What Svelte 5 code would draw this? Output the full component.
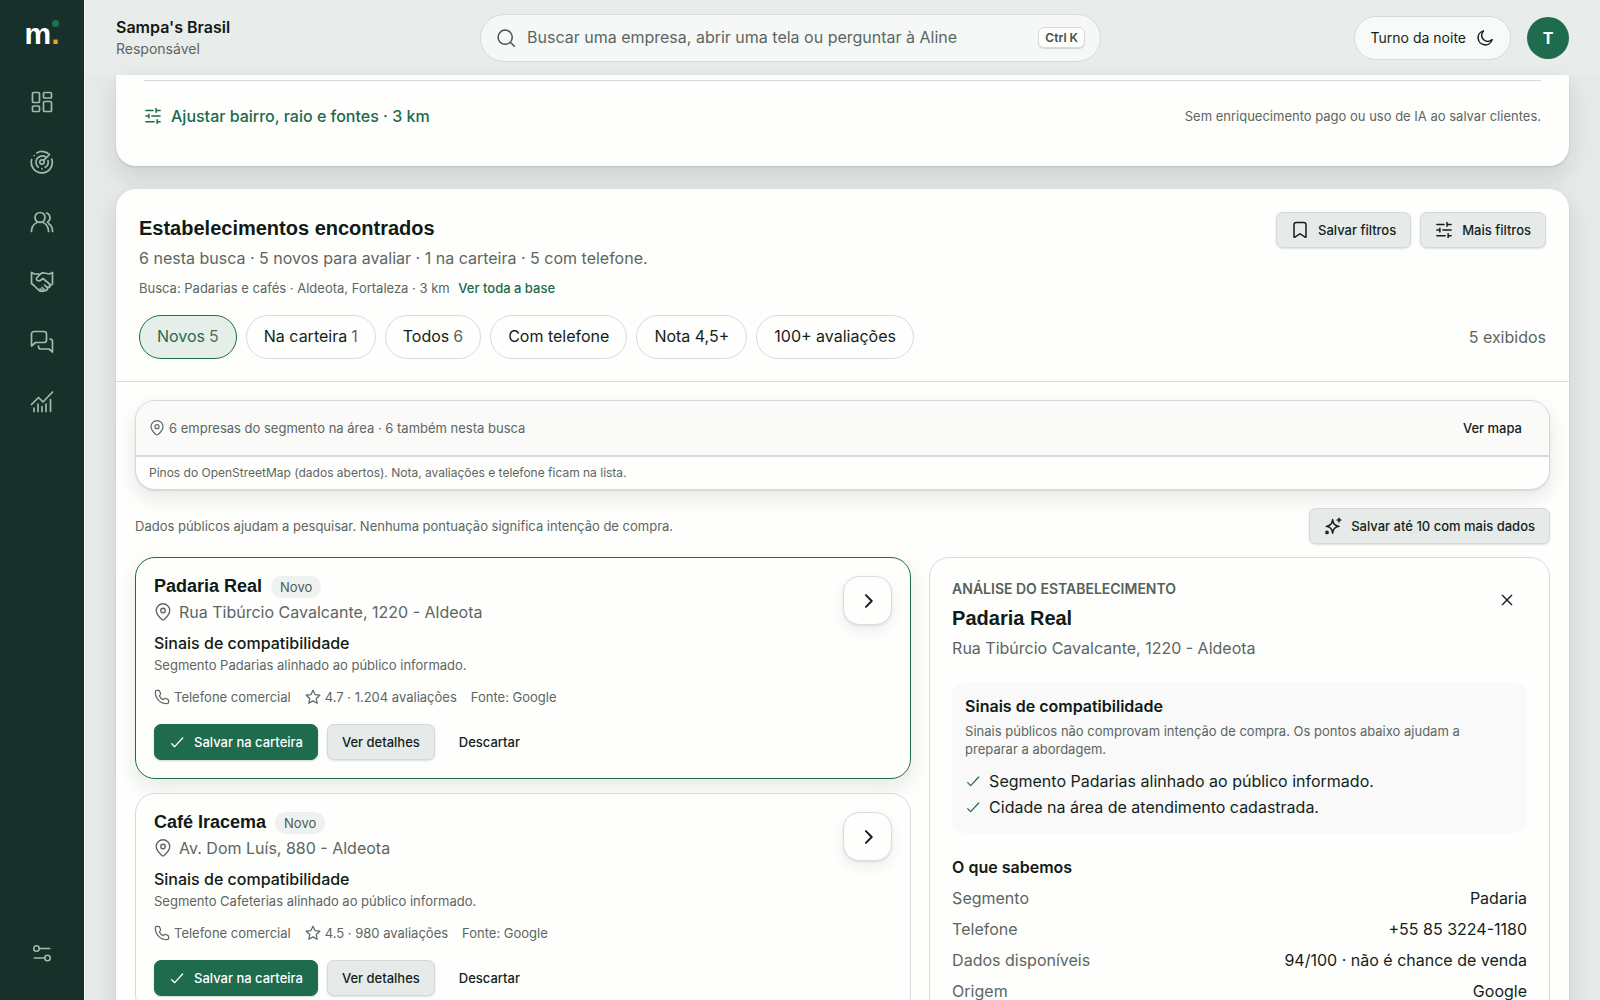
<script>
  const circle = (cx, cy, r) => `M${cx - r} ${cy}a${r} ${r} 0 1 0 ${r * 2} 0a${r} ${r} 0 1 0 ${-r * 2} 0`;

  const icons = {
    painel: [
      'M3.5 2.5h5a1 1 0 0 1 1 1v8a1 1 0 0 1-1 1h-5a1 1 0 0 1-1-1v-8a1 1 0 0 1 1-1z',
      'M3.5 16h5a1 1 0 0 1 1 1v3.5a1 1 0 0 1-1 1h-5a1 1 0 0 1-1-1V17a1 1 0 0 1 1-1z',
      'M14.5 2.500h6a1 1 0 0 1 1 1v3.500a1 1 0 0 1-1 1h-6a1 1 0 0 1-1-1v-3.500a1 1 0 0 1 1-1z',
      'M14.5 11.500h6a1 1 0 0 1 1 1v8a1 1 0 0 1-1 1h-6a1 1 0 0 1-1-1v-8a1 1 0 0 1 1-1z',
    ],
    radar: [
      circle(12, 12, 2.2),
      'M13.600 10.400 19.500 4.500M6.800 2.900a10.500 10.500 0 0 1 12.700 1.600',
      'M1.700 9.500a10.500 10.500 0 1 0 20-.5',
      'M15.500 6.800a6.300 6.300 0 0 0-7.200 10.300',
      'M18 10.500a6.300 6.300 0 0 1-2.700 6.800M12 18.700v.01M4.200 5.500v.01',
    ],
    pessoas: [
      circle(10, 7.5, 5),
      'M1.500 21.500v-1a8.500 8.500 0 0 1 17 0v1',
      'M16.500 3a5 5 0 0 1 .8 9.200M18.500 13.500a8.500 8.500 0 0 1 4 7.300v.7',
    ],
    acordo: [
      'M1.500 2.500l3 1.500h4.500M22.500 2.500l-3 1.500-5.500-1c-1.500-.2-2.500.2-3.500 1L7 7.500c-1 1-.7 2.500.5 3s2.500.3 3.500-.5l2-1.500 6.500 5.500c1 1 1 2 .2 2.800s-2 .7-2.700 0',
      'M1.500 3v10.500l2.500 2 5 5c1.200 1.200 2.700 1.200 3.500.2M22.500 3v11l-3 1.500',
      'M14.500 15l2.500 2.500c.8 1 .6 2-.2 2.600s-2 .3-2.600-.4L12 17.500M14.300 19.700c.2 1-.5 1.800-1.800 1.500L10 19',
    ],
    conversa: [
      'M4 1.500h10a2.500 2.500 0 0 1 2.500 2.500v6a2.500 2.500 0 0 1-2.500 2.500H5.500L1.500 16V4A2.500 2.500 0 0 1 4 1.500z',
      'M8.500 16v.5a2.500 2.500 0 0 0 2.500 2.500h8l3.500 3V11.500A2.500 2.500 0 0 0 20 9',
    ],
    grafico: [
      'M1.500 14.500l7-7 4.500 4.500L22.500 2',
      'M4 21.500V18M8 21.500V14M12 21.500V16.500M16 21.500V14M20.500 21.500V9.500',
    ],
    ajustes: [circle(6, 7, 3), 'M9 7h11.500', circle(18, 17.5, 3), 'M3.500 17.500H15'],
    filtros: [
      'M2.500 4.500h9.500M16 4.500h5.500M16 2v5M2.500 12h4M10.500 12h11M6.500 9.500v5M2.500 19.500h11M17.500 19.500h4M17.500 17v5',
    ],
    busca: [circle(11, 11, 8.5), 'M17.500 17.500L22 22'],
    lua: ['M21.500 14.100A9.500 9.500 0 1 1 9.900 2.500a7.800 7.800 0 0 0 11.600 11.600z'],
    marcador: ['M4 21V5a3 3 0 0 1 3-3h10a3 3 0 0 1 3 3v16c0 .8-.6 1-1.200.6L12 17l-6.800 4.600C4.600 22 4 21.800 4 21z'],
    pino: [
      'M12 22.500c-1 0-1.500-.6-2.200-1.200C6.500 18.200 3 14.500 3 10a9 9 0 0 1 18 0c0 4.500-3.500 8.200-6.800 11.300-.7.600-1.200 1.200-2.200 1.200z',
      circle(12, 10, 3),
    ],
    telefone: [
      'M8.500 3.500C8 2.300 7.300 2 6.300 2H4.500C3 2 2 3 2 4.500 2 14.500 9.500 22 19.500 22c1.500 0 2.500-1 2.500-2.500v-1.800c0-1-.4-1.700-1.500-2.200l-3-1.200c-1-.4-1.700-.2-2.400.5l-1.100 1.200C11.500 15 9 12.500 8 10l1.200-1.100c.7-.7.9-1.400.5-2.400z',
    ],
    estrela: [
      'M12 1.800l3 6.600 7.200.9-5.300 4.900 1.400 7.200L12 17.800l-6.300 3.600 1.400-7.200L1.800 9.300 9 8.400z',
    ],
    check: ['M4 14.500l4.500 4.500L20.500 6'],
    fechar: ['M5 5l14 14M19 5L5 19'],
    seta: ['M9.500 5l7 7-7 7'],
    magica: [
      'M11.500 3.500c.8 5.700 2.500 8 8.500 9-6 1-7.700 3.300-8.500 9-.8-5.700-2.500-8-8.500-9 6-1 7.700-3.300 8.500-9z',
      'M20 1.500v5M17.500 4h5',
      circle(4, 20.5, 1.5),
    ],
  };

  const menu = [
    { icone: 'painel', nome: 'Painel' },
    { icone: 'radar', nome: 'Radar' },
    { icone: 'pessoas', nome: 'Clientes' },
    { icone: 'acordo', nome: 'Negócios' },
    { icone: 'conversa', nome: 'Conversas' },
    { icone: 'grafico', nome: 'Relatórios' },
  ];

  const filtros = [
    { nome: 'Novos', total: 5 },
    { nome: 'Na carteira', total: 1 },
    { nome: 'Todos', total: 6 },
    { nome: 'Com telefone' },
    { nome: 'Nota 4,5+' },
    { nome: '100+ avaliações' },
  ];

  const empresas = [
    {
      nome: 'Padaria Real',
      endereco: 'Rua Tibúrcio Cavalcante, 1220 - Aldeota',
      sinal: 'Segmento Padarias alinhado ao público informado.',
      nota: '4.7 · 1.204 avaliações',
    },
    {
      nome: 'Café Iracema',
      endereco: 'Av. Dom Luís, 880 - Aldeota',
      sinal: 'Segmento Cafeterias alinhado ao público informado.',
      nota: '4.5 · 980 avaliações',
    },
  ];

  const pontos = ['Segmento Padarias alinhado ao público informado.', 'Cidade na área de atendimento cadastrada.'];

  const dados = [
    ['Segmento', 'Padaria'],
    ['Telefone', '+55 85 3224-1180'],
    ['Dados disponíveis', '94/100 · não é chance de venda'],
    ['Origem', 'Google'],
  ];

  let filtroAtivo = $state('Novos');
  let selecionada = $state(0);
</script>

{#snippet icone(nome, tamanho)}
  <svg class="icone" width={tamanho} height={tamanho} viewBox="0 0 24 24" aria-hidden="true">
    {#each icons[nome] as d}
      <path {d} />
    {/each}
  </svg>
{/snippet}

<div class="app">
  <aside class="lateral">
    <a class="logo" href="#inicio" aria-label="Início">m<span class="ponto">.</span><span class="bola"></span></a>
    <nav>
      {#each menu as item}
        <a href="#{item.icone}" aria-label={item.nome}>{@render icone(item.icone, 24)}</a>
      {/each}
    </nav>
    <a class="config" href="#ajustes" aria-label="Ajustes">{@render icone('ajustes', 22)}</a>
  </aside>

  <div class="pagina">
    <header class="topo">
      <div class="conta">
        <strong>Sampa's Brasil</strong>
        <span>Responsável</span>
      </div>
      <label class="busca">
        {@render icone('busca', 20)}
        <input type="text" aria-label="Buscar" placeholder="Buscar uma empresa, abrir uma tela ou perguntar à Aline" />
        <kbd>Ctrl K</kbd>
      </label>
      <div class="usuario">
        <button class="turno">Turno da noite {@render icone('lua', 18)}</button>
        <button class="avatar">T</button>
      </div>
    </header>

    <main>
      <section class="cartao consulta">
        <div class="consulta-linha">
          <a class="ajustar" href="#fontes">{@render icone('filtros', 18)} Ajustar bairro, raio e fontes · 3 km</a>
          <span class="pequeno">Sem enriquecimento pago ou uso de IA ao salvar clientes.</span>
        </div>
      </section>

      <section class="cartao resultados">
        <div class="cabecalho">
          <div class="cabecalho-linha">
            <div>
              <h2>Estabelecimentos encontrados</h2>
              <p class="resumo">6 nesta busca · 5 novos para avaliar · 1 na carteira · 5 com telefone.</p>
              <p class="pequeno origem">
                Busca: Padarias e cafés · Aldeota, Fortaleza · 3 km <a href="#base">Ver toda a base</a>
              </p>
            </div>
            <div class="acoes">
              <button class="botao cinza">{@render icone('marcador', 18)} Salvar filtros</button>
              <button class="botao cinza">{@render icone('filtros', 18)} Mais filtros</button>
            </div>
          </div>
          <div class="filtros">
            {#each filtros as filtro}
              <button class="chip" class:ativo={filtroAtivo === filtro.nome} onclick={() => (filtroAtivo = filtro.nome)}>
                {filtro.nome}{#if filtro.total}<span>{filtro.total}</span>{/if}
              </button>
            {/each}
            <span class="exibidos">5 exibidos</span>
          </div>
        </div>

        <div class="corpo">
          <div class="mapa">
            <div class="mapa-topo">
              <span class="mapa-texto pequeno">{@render icone('pino', 16)} 6 empresas do segmento na área · 6 também nesta busca</span>
              <button class="botao limpo">Ver mapa</button>
            </div>
            <p class="mapa-nota">Pinos do OpenStreetMap (dados abertos). Nota, avaliações e telefone ficam na lista.</p>
          </div>

          <div class="aviso">
            <span class="pequeno">Dados públicos ajudam a pesquisar. Nenhuma pontuação significa intenção de compra.</span>
            <button class="botao cinza">{@render icone('magica', 18)} Salvar até 10 com mais dados</button>
          </div>

          <div class="colunas">
            <div class="lista">
              {#each empresas as empresa, i}
                <article class="empresa" class:selecionada={selecionada === i}>
                  <div class="empresa-info">
                    <div class="titulo">
                      <h3>{empresa.nome}</h3>
                      <span class="selo">Novo</span>
                    </div>
                    <p class="endereco">{@render icone('pino', 18)} {empresa.endereco}</p>
                    <h4>Sinais de compatibilidade</h4>
                    <p class="pequeno">{empresa.sinal}</p>
                    <div class="meta pequeno">
                      <span>{@render icone('telefone', 16)} Telefone comercial</span>
                      <span>{@render icone('estrela', 16)} {empresa.nota}</span>
                      <span>Fonte: Google</span>
                    </div>
                    <div class="acoes">
                      <button class="botao verde">{@render icone('check', 16)} Salvar na carteira</button>
                      <button class="botao cinza">Ver detalhes</button>
                      <button class="botao limpo">Descartar</button>
                    </div>
                  </div>
                  <button class="abrir" aria-label="Abrir {empresa.nome}" onclick={() => (selecionada = i)}>
                    {@render icone('seta', 20)}
                  </button>
                </article>
              {/each}
            </div>

            <aside class="analise">
              <div class="analise-topo">
                <div>
                  <p class="rotulo">ANÁLISE DO ESTABELECIMENTO</p>
                  <h2>Padaria Real</h2>
                  <p class="local">Rua Tibúrcio Cavalcante, 1220 - Aldeota</p>
                </div>
                <button class="fechar" aria-label="Fechar">{@render icone('fechar', 16)}</button>
              </div>
              <div class="sinais">
                <h4>Sinais de compatibilidade</h4>
                <p>Sinais públicos não comprovam intenção de compra. Os pontos abaixo ajudam a preparar a abordagem.</p>
                <ul>
                  {#each pontos as ponto}
                    <li>{@render icone('check', 16)} {ponto}</li>
                  {/each}
                </ul>
              </div>
              <h4 class="sabemos">O que sabemos</h4>
              <dl>
                {#each dados as [campo, valor]}
                  <div>
                    <dt>{campo}</dt>
                    <dd>{valor}</dd>
                  </div>
                {/each}
              </dl>
            </aside>
          </div>
        </div>
      </section>
    </main>
  </div>
</div>

<style>
  :global(body) {
    background: #e6eae9;
  }

  .app {
    display: flex;
    height: 100vh;
    overflow: hidden;
    font-family: Inter, "Liberation Sans", sans-serif;
    font-size: 16px;
    line-height: 24px;
    color: #141f1b;
  }

  .app * {
    box-sizing: border-box;
  }

  h2, h3, h4, p, ul, dl, dd {
    margin: 0;
    padding: 0;
  }

  h2, h3 {
    font-family: "Liberation Sans", Arial, sans-serif;
    font-weight: 700;
    color: #101a16;
  }

  h2 {
    font-size: 20px;
    line-height: 32px;
  }

  button, input {
    font-family: inherit;
    color: inherit;
  }

  button {
    cursor: pointer;
  }

  a {
    color: #1b6a4c;
    text-decoration: none;
  }

  .icone {
    flex: none;
    fill: none;
    stroke: currentColor;
    stroke-width: 2;
    stroke-linecap: round;
    stroke-linejoin: round;
  }

  .pequeno {
    font-size: 13px;
    line-height: 20px;
    color: #5c6662;
  }

  /* Barra lateral */
  .lateral {
    flex: none;
    width: 84px;
    padding: 16px 0 36px;
    display: flex;
    flex-direction: column;
    align-items: center;
    background: #18302a;
  }

  .lateral a {
    color: #a3b9af;
  }

  .lateral .icone {
    display: block;
    stroke-width: 1.7;
  }

  .lateral .logo {
    position: relative;
    height: 36px;
    font-family: "Liberation Sans", Arial, sans-serif;
    font-size: 30px;
    font-weight: 700;
    line-height: 36px;
    color: #ffffff;
  }

  .ponto {
    color: #e3a31f;
  }

  .bola {
    position: absolute;
    top: 4px;
    right: 1px;
    width: 7px;
    height: 7px;
    border-radius: 50%;
    background: #1f7252;
  }

  .lateral nav {
    display: flex;
    flex-direction: column;
    gap: 36px;
    margin-top: 38px;
  }

  .config {
    margin-top: auto;
  }

  /* Topo */
  .pagina {
    flex: 1;
    min-width: 0;
    border-left: 1px solid #f4f6f5;
  }

  .topo {
    display: grid;
    grid-template-columns: 7fr minmax(0, 621px) 9fr;
    align-items: center;
    height: 75px;
    padding: 0 31px;
    background: #e8eceb;
  }

  .conta {
    display: flex;
    flex-direction: column;
  }

  .conta strong {
    font-weight: 600;
    line-height: 22px;
    color: #101a16;
  }

  .conta span {
    font-size: 14px;
    line-height: 22px;
    color: #5c6662;
  }

  .busca {
    display: flex;
    align-items: center;
    gap: 11px;
    height: 48px;
    padding: 0 15px;
    border: 1px solid #d6dcda;
    border-radius: 24px;
    background: #f6f8f8;
    color: #46504c;
  }

  .busca input {
    flex: 1;
    min-width: 0;
    padding: 0 0 2px;
    border: 0;
    outline: 0;
    background: none;
    font-size: 16px;
  }

  .busca input::placeholder {
    color: #5c6662;
    opacity: 1;
  }

  .busca .icone {
    stroke-width: 1.8;
  }

  kbd {
    padding: 0 6px;
    border: 1px solid #d6dcda;
    border-radius: 6px;
    background: #fefefc;
    box-shadow: 0 1px 1px rgba(20, 40, 32, 0.15);
    font-family: inherit;
    font-size: 12px;
    font-weight: 600;
    line-height: 19px;
  }

  .usuario {
    display: flex;
    justify-content: flex-end;
    align-items: center;
    gap: 16px;
  }

  .turno {
    display: flex;
    align-items: center;
    gap: 10px;
    height: 44px;
    padding: 0 16px;
    border: 1px solid #d6dcda;
    border-radius: 22px;
    background: #f8faf9;
    font-size: 14px;
  }

  .avatar {
    width: 42px;
    height: 42px;
    padding: 0;
    border: 0;
    border-radius: 50%;
    background: #1f6b4e;
    color: #ffffff;
    font-size: 16px;
    font-weight: 700;
  }

  /* Cartões */
  main {
    display: flex;
    flex-direction: column;
    gap: 23px;
    padding: 0 31px 32px;
  }

  .cartao {
    background: #fefefc;
    border-radius: 20px;
    box-shadow: 0 1px 2px rgba(24, 48, 42, 0.14), 0 10px 24px rgba(24, 48, 42, 0.13);
  }

  .consulta {
    padding: 5px 28px 15px;
    border-radius: 0 0 20px 20px;
  }

  .consulta-linha {
    display: flex;
    justify-content: space-between;
    align-items: center;
    height: 71px;
    border-top: 1px solid #d3d9d7;
  }

  .ajustar {
    display: flex;
    align-items: center;
    gap: 9px;
    font-weight: 500;
  }

  .cabecalho {
    padding: 23px 23px 22px;
    border-bottom: 1px solid #d6dcda;
  }

  .cabecalho-linha {
    display: flex;
    justify-content: space-between;
    align-items: flex-start;
  }

  .resumo {
    line-height: 28px;
    color: #5c6662;
  }

  .origem {
    margin-top: 6px;
  }

  .origem a {
    margin-left: 5px;
    font-weight: 500;
  }

  .acoes {
    display: flex;
    gap: 9px;
  }

  .botao {
    display: flex;
    align-items: center;
    gap: 9px;
    height: 36px;
    padding: 0 14px 1px;
    border: 1px solid #d3d9d7;
    border-radius: 7px;
    font-size: 13px;
    font-weight: 500;
    white-space: nowrap;
  }

  .cinza {
    background: #e6ebea;
    box-shadow: 0 1px 2px rgba(24, 48, 42, 0.14);
  }

  .verde {
    background: #1e6b4e;
    border-color: #1e6b4e;
    color: #ffffff;
    box-shadow: 0 1px 2px rgba(24, 48, 42, 0.2);
  }

  .limpo {
    border-color: transparent;
    background: none;
  }

  .filtros {
    display: flex;
    align-items: center;
    gap: 9px;
    margin-top: 17px;
  }

  .chip {
    height: 44px;
    padding: 0 17px 2px;
    border: 1px solid #d6dcda;
    border-radius: 22px;
    background: #fefefc;
    font-size: 16px;
  }

  .chip span {
    margin-left: 4px;
    color: #5c6662;
  }

  .chip.ativo {
    border-color: #1e6b4e;
    background: #e6eee9;
    color: #1e6b4e;
  }

  .exibidos {
    margin-left: auto;
    color: #5c6662;
  }

  .corpo {
    padding: 18px 19px;
  }

  .mapa {
    overflow: hidden;
    border: 1px solid #d3d9d7;
    border-radius: 20px;
    background: #fefefc;
    box-shadow: 0 1px 2px rgba(24, 48, 42, 0.1), 0 8px 20px rgba(24, 48, 42, 0.1);
  }

  .mapa-topo {
    display: flex;
    justify-content: space-between;
    align-items: center;
    height: 56px;
    padding: 0 12px 0 13px;
    border-bottom: 2px solid #d2dbd8;
    background: #fafaf9;
  }

  .mapa-texto {
    display: flex;
    align-items: center;
    gap: 4px;
  }

  .mapa-nota {
    padding: 0 13px;
    font-size: 12px;
    line-height: 32px;
    color: #5c6662;
  }

  .aviso {
    display: flex;
    justify-content: space-between;
    align-items: center;
    margin: 18px 0 13px;
  }

  .colunas {
    display: grid;
    grid-template-columns: 5fr 4fr;
    align-items: start;
    gap: 18px;
  }

  .lista {
    display: flex;
    flex-direction: column;
    gap: 14px;
  }

  .empresa {
    display: flex;
    justify-content: space-between;
    align-items: flex-start;
    padding: 18px;
    border: 1px solid #d6dcda;
    border-radius: 20px;
    background: #fefefc;
  }

  .selecionada {
    border-color: #1e6b4e;
    box-shadow: 0 8px 20px rgba(24, 48, 42, 0.1);
  }

  .titulo {
    display: flex;
    align-items: flex-start;
    gap: 9px;
  }

  .titulo h3 {
    font-size: 18px;
    line-height: 20px;
  }

  .selo {
    padding: 0 9px;
    border-radius: 11px;
    background: #edf1f0;
    font-size: 13px;
    line-height: 22px;
    color: #4f5a55;
  }

  .endereco {
    display: flex;
    align-items: center;
    gap: 7px;
    margin-top: 2px;
    color: #5c6662;
  }

  .endereco .icone, .mapa-texto .icone, .meta .icone {
    stroke-width: 1.8;
  }

  h4 {
    font-size: 16px;
    font-weight: 500;
    color: #101a16;
  }

  .empresa h4 {
    margin-top: 7px;
  }

  .meta {
    display: flex;
    gap: 14px;
    margin: 12px 0 17px;
  }

  .meta span {
    display: flex;
    align-items: center;
    gap: 4px;
  }

  .abrir {
    display: flex;
    align-items: center;
    justify-content: center;
    flex: none;
    width: 49px;
    height: 49px;
    padding: 0;
    border: 1px solid #d9dedc;
    border-radius: 16px;
    background: #fefefc;
    box-shadow: 0 1px 2px rgba(24, 48, 42, 0.1), 0 6px 14px rgba(24, 48, 42, 0.07);
  }

  .abrir .icone {
    stroke-width: 2.4;
  }

  /* Análise */
  .analise {
    padding: 22px;
    border: 1px solid #d6dcda;
    border-radius: 20px;
  }

  .analise-topo {
    display: flex;
    justify-content: space-between;
    align-items: flex-start;
  }

  .rotulo {
    font-size: 14px;
    font-weight: 600;
    line-height: 18px;
    color: #55605b;
  }

  .analise h2 {
    margin-top: 4px;
  }

  .local {
    margin-top: 2px;
    color: #5c6662;
  }

  .fechar {
    display: flex;
    align-items: center;
    justify-content: center;
    width: 40px;
    height: 40px;
    padding: 0;
    border: 0;
    background: none;
  }

  .sinais {
    margin-top: 23px;
    padding: 13px;
    border-radius: 12px;
    background: #f8f9f8;
  }

  .sinais h4 {
    font-weight: 600;
    line-height: 20px;
  }

  .sinais p {
    margin-top: 6px;
    font-size: 13px;
    line-height: 18px;
    color: #5c6662;
  }

  .sinais ul {
    margin-top: 10px;
    list-style: none;
  }

  .sinais li {
    display: flex;
    align-items: center;
    gap: 8px;
    line-height: 26px;
  }

  .sinais .icone {
    color: #1e6b4e;
    stroke-width: 1.8;
  }

  .sabemos {
    margin: 22px 0 4px;
    font-weight: 600;
  }

  dl div {
    display: flex;
    justify-content: space-between;
    line-height: 31px;
  }

  dt {
    color: #5c6662;
  }
</style>
